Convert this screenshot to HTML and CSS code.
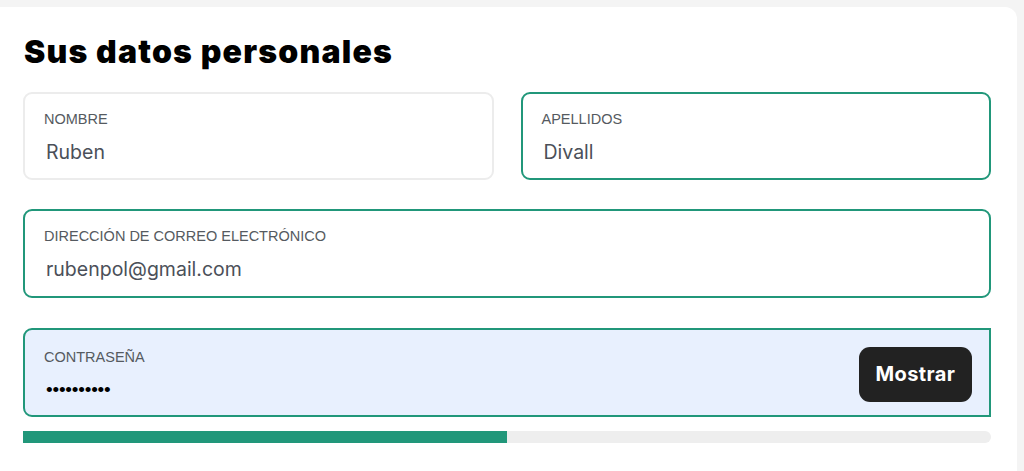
FILE: index.html
```html
<!DOCTYPE html>
<html lang="es">
<head>
<meta charset="utf-8">
<title>Sus datos personales</title>
<link rel="stylesheet" href="styles.css">
</head>
<body>
<div class="page">
  <section class="card">
    <h1 class="title">Sus datos personales</h1>
    <div class="row two">
      <div class="field">
        <div class="label">NOMBRE</div>
        <div class="value">Ruben</div>
      </div>
      <div class="field active">
        <div class="label">APELLIDOS</div>
        <div class="value">Divall</div>
      </div>
    </div>
    <div class="row email-row">
      <div class="field active tall">
        <div class="label">DIRECCIÓN DE CORREO ELECTRÓNICO</div>
        <div class="value">rubenpol@gmail.com</div>
      </div>
    </div>
    <div class="row last">
      <div class="field active password">
        <div class="pw-text">
          <div class="label">CONTRASEÑA</div>
          <div class="dots">••••••••••</div>
        </div>
        <button class="show-btn" type="button">Mostrar</button>
      </div>
    </div>
    <div class="strength"><div class="strength-fill" style="width:50%"></div></div>
  </section>
</div>
</body>
</html>
```

FILE: styles.css
```css
* { box-sizing: border-box; }
html, body { margin: 0; padding: 0; }
body {
  background: #f4f4f4;
  font-family: Inter, "Liberation Sans", Arial, sans-serif;
  height: 471px;
  overflow: hidden;
}
.page {
  padding: 7px 7px 0 0;
}
.card {
  background: #ffffff;
  border-radius: 0 12px 0 0;
  padding: 26px 26px 0 23px;
  height: 470px;
}
.title {
  margin: 0 0 21px 1px;
  font-family: Inter, "Liberation Sans", sans-serif;
  font-weight: 900;
  font-size: 32px;
  line-height: 38px;
  letter-spacing: 1.2px;
  color: #000;
}
.row {
  margin-bottom: 29px;
}
.row.email-row {
  margin-bottom: 30px;
}
.row.last {
  margin-bottom: 14px;
}
.row.two {
  display: grid;
  grid-template-columns: 1fr 1fr;
  gap: 27px;
}
.field {
  border: 2px solid #ececec;
  border-radius: 9px;
  padding: 16px 20px 0 19px;
  height: 88px;
  background: #fff;
}
.field.tall {
  height: 89px;
}
.field.active {
  border-color: #21977a;
}
.label {
  font-family: "Liberation Sans", Arial, sans-serif;
  font-size: 14.5px;
  line-height: 18px;
  color: #555a60;
}
.value {
  margin-top: 12px;
  margin-left: 2px;
  font-size: 19.5px;
  line-height: 24px;
  color: #4b5059;
}
.field.password {
  background: #e8f0fe;
  border-radius: 9px 0 0 9px;
  display: flex;
  align-items: center;
  justify-content: space-between;
  padding: 0 17px 0 19px;
  height: 89px;
}
.pw-text {
  display: flex;
  flex-direction: column;
  padding-top: 4px;
}
.dots {
  margin-top: 12px;
  margin-left: 2px;
  font-family: "Liberation Sans", Arial, sans-serif;
  font-size: 19px;
  line-height: 24px;
  color: #000;
  letter-spacing: -0.2px;
}
.show-btn {
  background: #222222;
  color: #fff;
  border: 0;
  border-radius: 11px;
  width: 113px;
  height: 55px;
  font-family: Inter, "Liberation Sans", sans-serif;
  font-weight: 700;
  font-size: 20px;
  letter-spacing: 0.4px;
  margin-top: 3px;
  cursor: pointer;
}
.strength {
  height: 12px;
  background: #eeeeee;
  border-radius: 0 6px 6px 0;
  overflow: hidden;
  width: 968px;
}
.strength-fill {
  height: 100%;
  background: #21977a;
}
```
